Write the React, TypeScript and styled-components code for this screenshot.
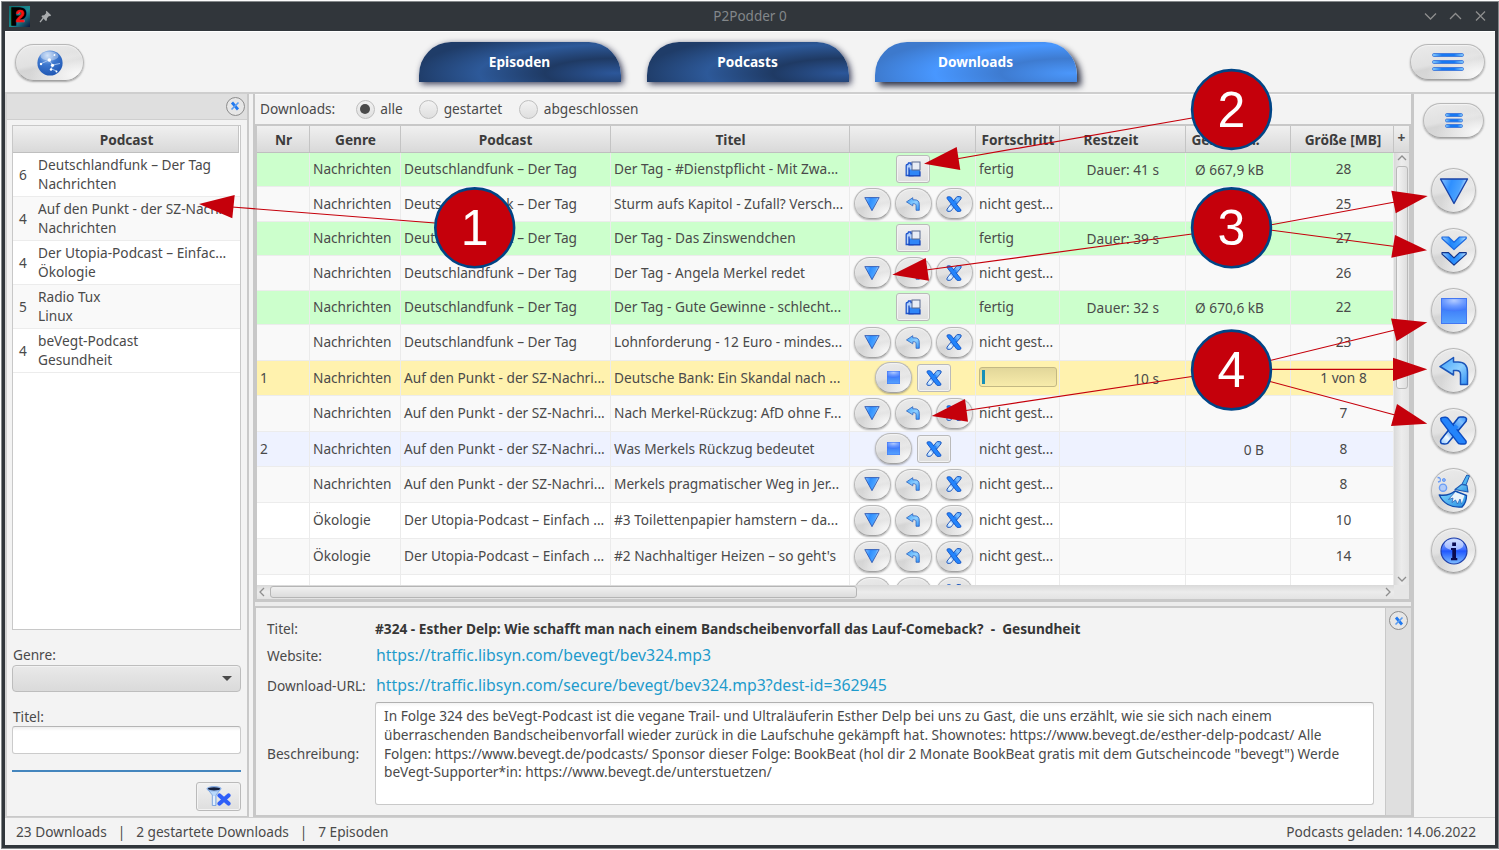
import React from "react";
import styled, { createGlobalStyle } from "styled-components";

const Global = createGlobalStyle`
  * { box-sizing: border-box; }
  body { margin: 0; background: #fdfdfd; overflow: hidden; }
  #root { font-family: "Noto Sans", sans-serif; font-size: 13.68px; color: #4a4a4a; line-height: 18px; white-space: nowrap; }
`;

const Window = styled.div`
  width: 1498px;
  height: 848px;
  margin: 1px 0 0 1px;
  border: 1px solid #85898b;
  background: #31363b;
  padding: 0 3px 3px;
  display: flex;
  flex-direction: column;
`;

const TitleBar = styled.header`
  height: 29px;
  display: grid;
  grid-template-columns: 200px 1fr 200px;
  align-items: center;
  color: #83878a;
  font-size: 13.5px;
`;
const TitleIcons = styled.div`
  display: flex;
  align-items: center;
  gap: 9px;
  padding-left: 4px;
`;
const TitleText = styled.div`
  text-align: center;
  line-height: 19px;
`;
const TitleControls = styled.div`
  display: flex;
  justify-content: flex-end;
  gap: 12px;
  padding: 0 8px 2px 0;
`;

const Toolbar = styled.div`
  height: 63px;
  background: #f3f3f3;
  border-top: 1px solid #fff;
  border-bottom: 2px solid #cecece;
  display: flex;
  justify-content: space-between;
  align-items: flex-start;
  padding: 12px 10px 0 10px;
`;
const Tabs = styled.nav`
  display: flex;
  gap: 26px;
  padding-left: 1px;
  margin-top: -2px;
`;
const Tab = styled.button<{ $active?: boolean }>`
  width: 202px;
  height: 40px;
  padding: 0 0 2px;
  border: 0;
  border-radius: 32px 32px 0 0 / 33px 33px 0 0;
  color: #fff;
  font: bold 13.66px "Noto Sans", sans-serif;
  background: ${(p) =>
    p.$active
      ? "radial-gradient(ellipse 200px 42px at 97% 78%, #4b97fb 0%, #3e7bd0 35%, #4897ff 68%, #3d79cc 100%)"
      : "radial-gradient(ellipse 200px 42px at 97% 78%, #2c579a 0%, #1f3a64 35%, #2d5999 68%, #1f3c68 100%)"};
  box-shadow: ${(p) =>
    p.$active ? "4px 4px 6px rgba(10,15,40,.85)" : "2px 2px 6px rgba(10,15,50,.8)"};
`;

const Glossy = styled.button<{ $w: number; $h: number }>`
  flex: none;
  width: ${(p) => p.$w}px;
  height: ${(p) => p.$h}px;
  padding: 0;
  display: flex;
  align-items: center;
  justify-content: center;
  border: 1.5px solid #b8b8b8;
  border-bottom-color: #a2a2a2;
  border-radius: ${(p) => p.$h / 2}px;
  background:
    radial-gradient(ellipse at 95% 85%, #fafafa 0%, rgba(245, 245, 245, 0) 55%),
    linear-gradient(168deg, #ebebeb 0%, #e1e1e1 48%, #d5d5d5 56%, #dcdcdc 100%);
  box-shadow: 0 1px 2px rgba(0, 0, 0, 0.32), inset 0 1px 1px #f4f4f4;
`;
const FlatButton = styled.button<{ $w: number; $h: number }>`
  flex: none;
  width: ${(p) => p.$w}px;
  height: ${(p) => p.$h}px;
  padding: 0;
  display: flex;
  align-items: center;
  justify-content: center;
  border: 1px solid #bababa;
  border-radius: 3px;
  background: linear-gradient(#f1f1f1, #dedede);
  box-shadow: inset 0 0 0 1px #f3f3f3;
`;
const CloseRound = styled.button`
  flex: none;
  width: 19px;
  height: 19px;
  padding: 0;
  display: flex;
  align-items: center;
  justify-content: center;
  border: 1.5px solid #8d8d8d;
  border-radius: 50%;
  background: #e6e6e6;
`;

const Main = styled.div`
  height: 724px;
  display: grid;
  grid-template-columns: 244px 4px 1161px 1fr;
  background: #f3f3f3;
`;

const Left = styled.aside`
  display: flex;
  flex-direction: column;
  background: #f3f3f3;
  border-right: 2px solid #c9c9c9;
  border-left: 2px solid #d2d2d2;
  border-bottom: 2px solid #c9c9c9;
`;
const LeftStrip = styled.div`
  height: 26px;
  background: #dfdfdf;
  border-bottom: 1px solid #cfcfcf;
  display: flex;
  justify-content: flex-end;
  align-items: center;
  padding: 0 2.5px 1px;
`;
const LeftBody = styled.div`
  flex: 1;
  display: flex;
  flex-direction: column;
  padding: 5px 6px 0 5px;
`;
const PodcastTable = styled.div`
  height: 505px;
  border: 1px solid #c8c8c8;
  background: #fff;
`;
const PodcastHead = styled.div`
  height: 27px;
  border-bottom: 1px solid #bfbfbf;
  border-right: 1px solid #c4c4c4;
  margin-right: 1px;
  background: linear-gradient(#f0f0f0, #d9d9d9);
  text-align: center;
  font-weight: bold;
  line-height: 27px;
  padding-left: 2px;
  color: #3c3c3c;
`;
const PodcastRow = styled.div<{ $alt: boolean }>`
  height: 44px;
  display: grid;
  grid-template-columns: 24px 1fr;
  align-items: center;
  padding-left: 1px;
  border-bottom: 1px solid #ececec;
  background: ${(p) => (p.$alt ? "#f9f9f9" : "#fff")};
`;
const Count = styled.span`
  padding-left: 5px;
`;
const TwoLines = styled.div`
  line-height: 19px;
  padding-bottom: 2px;
`;
const FieldLabel = styled.label<{ $top: number }>`
  height: 18px;
  padding-left: 1px;
  margin-top: ${(p) => p.$top}px;
`;
const Combo = styled.div`
  height: 27px;
  border: 1px solid #bdbdbd;
  border-radius: 4px;
  background: linear-gradient(#e9e9e9, #dadada);
  box-shadow: inset 0 1px 0 #f2f2f2;
  display: flex;
  align-items: center;
  justify-content: flex-end;
  padding-right: 8px;
  margin-top: 1px;
`;
const Input = styled.div`
  height: 28px;
  border: 1px solid #cbcbcb;
  border-top-color: #b5b5b5;
  border-radius: 3px;
  background: linear-gradient(#efefef, #fff 4px);
`;
const BlueLine = styled.div`
  height: 2px;
  margin-top: 16px;
  background: #4485bd;
`;
const ButtonEnd = styled.div`
  display: flex;
  justify-content: flex-end;
  margin-top: 10px;
`;

const Center = styled.main`
  background: #c8c8c8;
  display: flex;
  flex-direction: column;
`;
const FilterBar = styled.div`
  height: 30px;
  margin: 0 3px 0 2px;
  background: #f3f3f3;
  display: flex;
  align-items: center;
  padding: 0 0 1px 5px;
  border-top: 1px solid #fafafa;
`;
const Radio = styled.span<{ $gap: number }>`
  width: 19px;
  height: 19px;
  margin: 0 5.5px 0 ${(p) => p.$gap}px;
  border-radius: 50%;
  border: 1px solid #bfbfbf;
  background: linear-gradient(#f2f2f2, #dfdfdf);
  display: flex;
  align-items: center;
  justify-content: center;
`;
const Dot = styled.span`
  width: 10px;
  height: 10px;
  border-radius: 50%;
  background: #4a4a4a;
`;

const TableBox = styled.div`
  height: 473px;
  margin: 2px 5px 0 4px;
  background: #e6e6e6;
  display: grid;
  grid-template-columns: 1137px 15px;
  grid-template-rows: 27px 432px 14px;
`;
const columns = "53px 91px 210px 239px 126px 84px 126px 105px 103px";
const HeadRow = styled.div`
  display: grid;
  grid-template-columns: ${columns};
  background: linear-gradient(#f0f0f0, #d9d9d9);
  border-bottom: 1px solid #bfbfbf;
`;
const HeadCell = styled.div<{ $shift?: number }>`
  border-right: 1px solid #c4c4c4;
  text-align: center;
  font-weight: bold;
  line-height: 27px;
  color: #3c3c3c;
  text-indent: ${(p) => p.$shift ?? 1}px;
  overflow: hidden;
`;
const Rows = styled.div`
  overflow: hidden;
  background: #fff;
`;
const Row = styled.div<{ $h: number; $bg: string }>`
  height: ${(p) => p.$h}px;
  background: ${(p) => p.$bg};
  display: grid;
  grid-template-columns: ${columns};
  border-bottom: 1px solid #ececec;
`;
const Cell = styled.div<{ $align?: string; $padR?: number; $top?: number }>`
  display: flex;
  align-items: center;
  justify-content: ${(p) => p.$align ?? "flex-start"};
  gap: 4px;
  padding: ${(p) => p.$top ?? 0}px ${(p) => p.$padR ?? 0}px ${(p) => (p.$top ? 0 : 1)}px 3px;
  border-right: 1px solid #ebebeb;
  min-width: 0;
`;
const Actions = styled.div<{ $gap: number }>`
  display: flex;
  align-items: center;
  justify-content: center;
  gap: ${(p) => p.$gap}px;
  border-right: 1px solid #ebebeb;
  padding: 0 0 1px 1px;
`;
const Progress = styled.div`
  width: 78px;
  height: 20px;
  margin-top: -1px;
  border: 1px solid #c3b884;
  border-radius: 3px;
  background: linear-gradient(#e2d79a, #f7ebaa);
  padding: 2px;
`;
const ProgressFill = styled.div`
  width: 3px;
  height: 14px;
  background: #1690b8;
`;
const PlusCell = styled.div`
  background: linear-gradient(#f0f0f0, #d9d9d9);
  border-bottom: 1px solid #bfbfbf;
  font-weight: bold;
  text-align: center;
  line-height: 23px;
`;
const VScroll = styled.div`
  display: flex;
  flex-direction: column;
  align-items: center;
  background: linear-gradient(90deg, #d9d9d9, #ececec 50%, #e3e3e3);
  padding-top: 2px;
`;
const VThumb = styled.div`
  width: 12px;
  height: 223px;
  margin: 5px 0 187px;
  border: 1px solid #b9b9b9;
  border-radius: 3px;
  background: linear-gradient(90deg, #f4f4f4, #dedede);
`;
const HScroll = styled.div`
  display: flex;
  align-items: center;
  background: linear-gradient(#d9d9d9, #ececec 50%, #e3e3e3);
  padding: 0 2px 0 1px;
`;
const HThumb = styled.div`
  width: 587px;
  height: 12px;
  margin: 0 auto 0 5px;
  border: 1px solid #b5b5b5;
  border-radius: 3px;
  background: linear-gradient(#f0f0f0, #dcdcdc);
`;

const SplitH = styled.div`
  height: 4px;
  margin: 3px 3px 0 2px;
  background: #ececec;
`;
const Detail = styled.section`
  height: 207px;
  margin: 2px 3px 0 3px;
  display: grid;
  grid-template-columns: 1fr 26px;
  background: #f3f3f3;
`;
const DetailStrip = styled.div`
  background: #dfdfdf;
  border-left: 1px solid #c9c9c9;
  padding: 3px 0 0 3px;
`;
const DetailGrid = styled.div`
  display: grid;
  grid-template-columns: 108px 999px;
  grid-template-rows: 26px 27px 33px 103px;
  padding: 8px 0 0 11px;
  align-items: center;
`;
const TitleLine = styled.span`
  padding-bottom: 1px;
`;
const Strong = styled.strong`
  color: #363636;
  padding-bottom: 1px;
`;
const Link = styled.a`
  color: #1e9bcc;
  font-size: 15.8px;
  line-height: 19px;
  padding-left: 1px;
`;
const TextArea = styled.div`
  height: 103px;
  border: 1px solid #c9c9c9;
  border-top-color: #b0b0b0;
  border-radius: 3px;
  background: linear-gradient(#f3f3f3, #fff 4px);
  padding: 4px 0 0 8px;
  line-height: 18.75px;
`;

const Side = styled.aside`
  display: flex;
  flex-direction: column;
  align-items: center;
  padding: 9px 2px 0 0;
  gap: 15px;
`;
const SideGap = styled.div`
  height: 0;
`;

const Status = styled.footer`
  height: 27px;
  background: #f3f3f3;
  display: flex;
  justify-content: space-between;
  align-items: center;
  padding: 1px 19px 0 11px;
  box-shadow: 0 -1px 0 #d0d0d0;
`;
const Sep = styled.span`
  margin: 0 10.9px;
`;

const Overlay = styled.svg`
  position: absolute;
  left: 0;
  top: 0;
  pointer-events: none;
`;

const Defs = () => (
  <svg width="0" height="0" style={{ position: "absolute" }}>
    <defs>
      <linearGradient id="down" x1="0" y1="0" x2="1" y2="0.3">
        <stop offset="0" stopColor="#8ac4ff" />
        <stop offset=".4" stopColor="#2e8fff" />
        <stop offset=".75" stopColor="#4aa2ff" />
        <stop offset="1" stopColor="#e6f4ff" />
      </linearGradient>
      <linearGradient id="chev" x1="0" y1="0" x2="1" y2="0">
        <stop offset="0" stopColor="#9fd0ff" />
        <stop offset=".35" stopColor="#1f85fa" />
        <stop offset=".7" stopColor="#3b9bff" />
        <stop offset="1" stopColor="#bfe4ff" />
      </linearGradient>
      <radialGradient id="sq" cx=".5" cy=".2" r=".8">
        <stop offset="0" stopColor="#b3cbff" />
        <stop offset=".5" stopColor="#6d9bff" />
        <stop offset="1" stopColor="#3f78fa" />
      </radialGradient>
      <linearGradient id="sqLow" x1="0" y1="0" x2="0" y2="1">
        <stop offset="0" stopColor="#2b62f4" />
        <stop offset="1" stopColor="#58a4ff" />
      </linearGradient>
      <linearGradient id="undo" x1="0" y1="0" x2="1" y2="1">
        <stop offset="0" stopColor="#3b9ffa" />
        <stop offset=".55" stopColor="#8fd0ff" />
        <stop offset="1" stopColor="#2f90f4" />
      </linearGradient>
      <linearGradient id="slash" x1="0" y1="1" x2="1" y2="0">
        <stop offset="0" stopColor="#8fc6ff" />
        <stop offset=".25" stopColor="#f0faff" />
        <stop offset=".5" stopColor="#2a83f0" />
        <stop offset=".8" stopColor="#7fc0ff" />
        <stop offset="1" stopColor="#2f8ffb" />
      </linearGradient>
      <linearGradient id="bar" x1="0" y1="0" x2="1" y2="0">
        <stop offset="0" stopColor="#8fd6ff" />
        <stop offset=".3" stopColor="#1379f4" />
        <stop offset=".7" stopColor="#1379f4" />
        <stop offset="1" stopColor="#8fd6ff" />
      </linearGradient>
      <radialGradient id="globe" cx=".4" cy=".2" r=".8">
        <stop offset="0" stopColor="#b9d3f5" />
        <stop offset=".45" stopColor="#3f79cf" />
        <stop offset="1" stopColor="#1f57b4" />
      </radialGradient>
      <linearGradient id="info" x1="0" y1="0" x2="0" y2="1">
        <stop offset="0" stopColor="#a9c4ff" />
        <stop offset=".45" stopColor="#3c6cff" />
        <stop offset=".5" stopColor="#1f56ff" />
        <stop offset="1" stopColor="#7fc0ff" />
      </linearGradient>
      <linearGradient id="broom" x1="0" y1="0" x2="1" y2="1">
        <stop offset="0" stopColor="#7fd8ff" />
        <stop offset="1" stopColor="#2a8fe0" />
      </linearGradient>
      <linearGradient id="app" x1="0" y1="0" x2="1" y2="1">
        <stop offset="0" stopColor="#0d6a6e" />
        <stop offset=".55" stopColor="#1b8c92" />
        <stop offset="1" stopColor="#10143c" />
      </linearGradient>
    </defs>
  </svg>
);

type IconProps = { size: number };

const DownIcon = ({ size }: IconProps) => (
  <svg width={size} height={size} viewBox="0 0 30 30">
    <path d="M1.500 3H28.500L15 27.500Z" fill="url(#down)" stroke="#1a43a6" strokeWidth="1.400" strokeLinejoin="round" />
  </svg>
);
const DoubleDownIcon = ({ size }: IconProps) => (
  <svg width={size} height={size} viewBox="0 0 30 30">
    {[0, 15.6].map((y) => (
      <path
        key={y}
        transform={`translate(0 ${y})`}
        d="M3 1H9.500L15 6.300L20.500 1H27.200V2.500L15 13.500L3 2.500Z"
        fill="url(#chev)"
        stroke={y ? "#10348c" : "#1c6ae0"}
        strokeWidth="1.200"
        strokeLinejoin="round"
      />
    ))}
  </svg>
);
const StopIcon = ({ size }: IconProps) => (
  <svg width={size} height={size} viewBox="0 0 26 26">
    <rect width="26" height="26" fill="url(#sqLow)" />
    <path d="M0 0H26V11Q13 15.500 0 11Z" fill="url(#sq)" />
    <rect x=".5" y=".5" width="25" height="25" fill="none" stroke="#4377f2" />
  </svg>
);
const UndoIcon = ({ size }: IconProps) => (
  <svg width={size} height={size} viewBox="0 0 30 30">
    <path
      d="M1 10.500L14.500 1.500V6H19C25.500 6 28.500 10 28.500 16V28.500H21.500V18.500C21.500 15.500 20 14.500 17.500 14.500H14.500V19Z"
      fill="url(#undo)"
      stroke="#1c55b8"
      strokeWidth="1.500"
      strokeLinejoin="round"
    />
  </svg>
);
const XIcon = ({ size }: IconProps) => (
  <svg width={size} height={size} viewBox="0 0 30 30">
    <path
      d="M28.500 3Q28 1 25.500 1H22Q20 1 19 3L2 24.500Q1 27 2.500 28.500Q6 29.500 9 28.300L28 5.500Z"
      fill="url(#slash)"
      stroke="#0d46b4"
      strokeWidth="1.600"
      strokeLinejoin="round"
    />
    <path
      d="M1.800 2.500Q2.500 1 7 1.300Q9 1.500 10.200 3.500L28 26Q28.500 29 26 29H22.500Q20 29 19 27L2.200 5Z"
      fill="#2484fb"
      stroke="#0d4cc0"
      strokeWidth="1.500"
      strokeLinejoin="round"
    />
    <path d="M12.200 17.500L18.500 10" stroke="#2484fb" strokeWidth="4.500" />
  </svg>
);
const SmallX = () => (
  <svg width="10" height="10" viewBox="0 0 10 10">
    <path d="M2 1.500L8 8.500" stroke="#2079f0" strokeWidth="2.800" />
    <path d="M8.500 1.500L1.500 8.500" stroke="#5b9cf0" strokeWidth="1.600" />
  </svg>
);
const BarsIcon = ({ w, h }: { w: number; h: number }) => (
  <svg width={w} height={h} viewBox={`0 0 ${w} ${h}`}>
    {[0, 1, 2].map((i) => (
      <rect
        key={i}
        x=".6"
        y={i * ((h - 4) / 2) + 0.6}
        width={w - 1.2}
        height="2.800"
        rx="1"
        fill="url(#bar)"
        stroke="#3f78dc"
        strokeWidth="1"
      />
    ))}
  </svg>
);
const FolderIcon = () => (
  <svg width="16" height="16" viewBox="0 0 16 16">
    <path d="M1.200 14.500V4.500Q1.200 3.500 2.200 3.500H2.800L3.500 2H6V3.500H8V14.500Z" fill="#b5d2fb" stroke="#1f55cc" strokeWidth="1.300" />
    <path d="M4 15V8.500H15V15Z" fill="#2f86f8" />
    <rect x="7" y="1" width="8" height="8" fill="#e9edf6" stroke="#5b6a90" strokeWidth="1" />
    <path d="M4 6.500V14.800H15V10.200" fill="none" stroke="#123fb4" strokeWidth="1.200" />
  </svg>
);
const GlobeIcon = () => (
  <svg width="26" height="26" viewBox="0 0 26 26">
    <circle cx="13" cy="13" r="12.600" fill="url(#globe)" />
    <ellipse cx="12.500" cy="6" rx="9" ry="4.500" fill="#fff" opacity=".35" />
    <path d="M3.500 14L12 10L15.500 15L23 13.500M15.500 15L14.500 19L19.500 21M17 5L12 10" stroke="#a9c8f2" strokeWidth=".9" fill="none" />
    <g fill="#fff">
      <circle cx="4" cy="14" r="1.200" />
      <circle cx="12.300" cy="10" r="1.800" />
      <circle cx="15.500" cy="15.300" r="1.600" />
      <circle cx="14" cy="19.500" r="1.200" />
      <circle cx="19.500" cy="21.500" r="1" />
      <circle cx="17.500" cy="5" r=".9" />
    </g>
  </svg>
);
const FilterIcon = () => (
  <svg width="25" height="21" viewBox="0 0 25 21">
    <path d="M1 2.500L6.300 9V19.500H10V9L15 2.500Z" fill="#b8d8fb" stroke="#7ba4dc" strokeWidth=".9" />
    <ellipse cx="8" cy="2.800" rx="6.800" ry="2.200" fill="#16203c" stroke="#8eb4ea" strokeWidth="1.200" />
    <path d="M8 10V19" stroke="#fff" strokeWidth="1.200" />
    <path d="M13.500 9.500L22.500 17.500M22.500 9.500L13.500 17.500" stroke="#2f5ff8" strokeWidth="4.200" strokeLinecap="round" />
  </svg>
);
const BroomIcon = () => (
  <svg width="34" height="34" viewBox="0 0 34 34">
    <g fill="none" stroke="#6a9cf4">
      <circle cx="6" cy="13.700" r="3.600" fill="#b3ccf8" strokeWidth="1.400" />
      <circle cx="6.900" cy="6" r="1.500" fill="#86b0f8" />
      <path d="M.5 3.500Q4.500 3.500 3 7.500L1 8" strokeWidth="1.300" />
    </g>
    <path
      d="M2.300 21C9 22 14.500 20 18 17L29.500 21.500C29.500 26 28 30 25 33C14 34 6 29 2.300 21Z"
      fill="url(#broom)"
      stroke="#0f4cae"
      strokeWidth="1.400"
      strokeLinejoin="round"
    />
    <path d="M18 18L27.500 21.500L24.500 30L23 25L20.500 30L18.500 26L15 28.500L16 24L11.500 25.500Z" fill="#e8f3fb" />
    <path d="M18 18L11.500 25.500L16 24L15 28.500L18.500 26L20.500 30L23 25L24.500 30" fill="none" stroke="#2a63b8" strokeWidth=".8" />
    <path d="M29.800 1L32.500 1.800L29 11L25 10Z" fill="#4fb4f0" stroke="#1d5ab4" strokeWidth="1" />
    <path d="M18 15.500L24.500 10.500L30 11.500L31 18Z" fill="url(#broom)" stroke="#1d5ab4" strokeWidth="1.100" strokeLinejoin="round" />
  </svg>
);
const InfoIcon = () => (
  <svg width="28" height="28" viewBox="0 0 28 28">
    <circle cx="14" cy="14" r="13" fill="url(#info)" stroke="#1f3faa" strokeWidth="1.200" />
    <ellipse cx="14" cy="7.500" rx="9.500" ry="5.500" fill="#fff" opacity=".5" />
    <path d="M12.200 5.500H16V9H12.200ZM11 11H16V21H17.300V23.300H11V21H12.300V13H11Z" fill="#0a0a50" />
  </svg>
);
const AppIcon = () => (
  <svg width="21" height="21" viewBox="0 0 21 21" overflow="visible">
    <rect width="21" height="21" fill="url(#app)" />
    <text x="1.500" y="19.300" fontFamily="Liberation Sans, sans-serif" fontWeight="bold" fontSize="24" stroke="#000" strokeWidth="1.500" fill="#000">P</text>
    <text x="6.500" y="15.500" fontFamily="Liberation Sans, sans-serif" fontWeight="bold" fontSize="16" stroke="#f41414" strokeWidth=".6" fill="#f41414">2</text>
  </svg>
);
const PinIcon = () => (
  <svg width="13" height="13" viewBox="0 0 13 13" fill="#a9acae">
    <path d="M7.500 .8L12.200 5.300L11 6.200L10 6L8 8.200L7.800 10.500L6.800 11L2.500 6.500L3 5.500L5.200 5.200L7.300 3L6.800 2Z" />
    <path d="M4.300 8L1 12.200" stroke="#a9acae" strokeWidth="1.300" />
  </svg>
);
const Chevron = ({ d, w = 10, h = 6 }: { d: string; w?: number; h?: number }) => (
  <svg width={w} height={h} viewBox={`0 0 ${w} ${h}`} fill="none" stroke="#8e8e8e" strokeWidth="1.300">
    <path d={d} />
  </svg>
);

type Kind = "folder" | "wait" | "run";
type Item = {
  h: number; bg: string; nr?: string; genre: string; podcast: string; title: string;
  kind: Kind; state?: string; rest?: string; speed?: string; size: string;
};
const GREEN = "#ccffcc";
const GREY = "#f9f9f9";
const DF = "Deutschlandfunk – Der Tag";
const SZ = "Auf den Punkt - der SZ-Nachri...";
const UT = "Der Utopia-Podcast – Einfach ...";
const NG = "nicht gest...";
const items: Item[] = [
  { h: 34, bg: GREEN, genre: "Nachrichten", podcast: DF, title: "Der Tag - #Dienstpflicht - Mit Zwa...", kind: "folder", state: "fertig", rest: "Dauer: 41 s", speed: "Ø 667,9 kB", size: "28" },
  { h: 35, bg: GREY, genre: "Nachrichten", podcast: DF, title: "Sturm aufs Kapitol - Zufall? Versch...", kind: "wait", state: NG, size: "25" },
  { h: 34, bg: GREEN, genre: "Nachrichten", podcast: DF, title: "Der Tag - Das Zinswendchen", kind: "folder", state: "fertig", rest: "Dauer: 39 s", size: "27" },
  { h: 35, bg: GREY, genre: "Nachrichten", podcast: DF, title: "Der Tag - Angela Merkel redet", kind: "wait", state: NG, size: "26" },
  { h: 34, bg: GREEN, genre: "Nachrichten", podcast: DF, title: "Der Tag - Gute Gewinne - schlecht...", kind: "folder", state: "fertig", rest: "Dauer: 32 s", speed: "Ø 670,6 kB", size: "22" },
  { h: 36, bg: GREY, genre: "Nachrichten", podcast: DF, title: "Lohnforderung - 12 Euro - mindes...", kind: "wait", state: NG, size: "23" },
  { h: 35, bg: "#fff2ae", nr: "1", genre: "Nachrichten", podcast: SZ, title: "Deutsche Bank: Ein Skandal nach ...", kind: "run", rest: "10 s", size: "1 von 8" },
  { h: 36, bg: GREY, genre: "Nachrichten", podcast: SZ, title: "Nach Merkel-Rückzug: AfD ohne F...", kind: "wait", state: NG, size: "7" },
  { h: 35, bg: "#eef2ff", nr: "2", genre: "Nachrichten", podcast: SZ, title: "Was Merkels Rückzug bedeutet", kind: "run", state: NG, speed: "0 B", size: "8" },
  { h: 36, bg: GREY, genre: "Nachrichten", podcast: SZ, title: "Merkels pragmatischer Weg in Jer...", kind: "wait", state: NG, size: "8" },
  { h: 36, bg: "#fff", genre: "Ökologie", podcast: UT, title: "#3 Toilettenpapier hamstern – da...", kind: "wait", state: NG, size: "10" },
  { h: 36, bg: GREY, genre: "Ökologie", podcast: UT, title: "#2 Nachhaltiger Heizen – so geht's", kind: "wait", state: NG, size: "14" },
  { h: 36, bg: "#fff", genre: "", podcast: "", title: "", kind: "wait", size: "" },
];

const RowActions = ({ kind }: { kind: Kind }) => {
  if (kind === "folder")
    return (
      <Actions $gap={0}>
        <FlatButton $w={34} $h={28}><FolderIcon /></FlatButton>
      </Actions>
    );
  if (kind === "run")
    return (
      <Actions $gap={5}>
        <Glossy $w={37} $h={31}><StopIcon size={13} /></Glossy>
        <FlatButton $w={34} $h={28}><XIcon size={16} /></FlatButton>
      </Actions>
    );
  return (
    <Actions $gap={4}>
      <Glossy $w={37} $h={31}><DownIcon size={16} /></Glossy>
      <Glossy $w={37} $h={31}><UndoIcon size={14} /></Glossy>
      <Glossy $w={37} $h={31}><XIcon size={16} /></Glossy>
    </Actions>
  );
};

const podcasts = [
  ["6", "Deutschlandfunk – Der Tag", "Nachrichten"],
  ["4", "Auf den Punkt - der SZ-Nach...", "Nachrichten"],
  ["4", "Der Utopia-Podcast – Einfac...", "Ökologie"],
  ["5", "Radio Tux", "Linux"],
  ["4", "beVegt-Podcast", "Gesundheit"],
];

const arrows = [
  { line: [435, 223, 232, 207], tip: "199,204 234.700,195 232.300,218.300" },
  { line: [1192, 118, 956, 159], tip: "924,163.700 956.700,147 960.300,170" },
  { line: [1192, 234, 926, 270], tip: "892.300,274.700 925.700,258 929,280.700" },
  { line: [1270, 225, 1395, 202], tip: "1427.700,196 1391.300,190.700 1395.700,213.300" },
  { line: [1270, 230, 1395, 246.5], tip: "1427,250.300 1395,235 1391.300,257.700" },
  { line: [1270, 360.5, 1395, 330], tip: "1427.300,322.300 1391,318.500 1396.500,341.300" },
  { line: [1270, 369.3, 1395, 369.3], tip: "1427.300,369.300 1393,357.700 1393,381" },
  { line: [1270, 381.5, 1395, 415], tip: "1427.300,423.700 1397,404 1391,426" },
  { line: [1192, 376.5, 966, 410.5], tip: "931.700,416 965,399 968,421.700" },
];
const badges = [
  { n: "1", x: 474.7, y: 227.8 },
  { n: "2", x: 1231.5, y: 109.5 },
  { n: "3", x: 1231.5, y: 227.8 },
  { n: "4", x: 1231.5, y: 370 },
];

export default function App() {
  return (
    <>
      <Global />
      <Defs />
      <Window>
        <TitleBar>
          <TitleIcons><AppIcon /><PinIcon /></TitleIcons>
          <TitleText>P2Podder 0</TitleText>
          <TitleControls>
            <Chevron w={13} h={12} d="M1 3.500L6.500 9L12 3.500" />
            <Chevron w={13} h={12} d="M1 9L6.500 3.500L12 9" />
            <Chevron w={13} h={12} d="M2 1.500L11 10.500M11 1.500L2 10.500" />
          </TitleControls>
        </TitleBar>

        <Toolbar>
          <Glossy $w={69} $h={37}><GlobeIcon /></Glossy>
          <Tabs>
            <Tab>Episoden</Tab>
            <Tab>Podcasts</Tab>
            <Tab $active>Downloads</Tab>
          </Tabs>
          <Glossy $w={75} $h={36}><BarsIcon w={32} h={18} /></Glossy>
        </Toolbar>

        <Main>
          <Left>
            <LeftStrip><CloseRound><SmallX /></CloseRound></LeftStrip>
            <LeftBody>
              <PodcastTable>
                <PodcastHead>Podcast</PodcastHead>
                {podcasts.map(([n, name, genre], i) => (
                  <PodcastRow key={i} $alt={i % 2 === 1}>
                    <Count>{n}</Count>
                    <TwoLines><div>{name}</div><div>{genre}</div></TwoLines>
                  </PodcastRow>
                ))}
              </PodcastTable>
              <FieldLabel $top={16}>Genre:</FieldLabel>
              <Combo>
                <svg width="10" height="5" viewBox="0 0 10 5"><path d="M0 0H10L5 5Z" fill="#4a4a4a" /></svg>
              </Combo>
              <FieldLabel $top={16}>Titel:</FieldLabel>
              <Input />
              <BlueLine />
              <ButtonEnd><FlatButton $w={45} $h={29}><FilterIcon /></FlatButton></ButtonEnd>
            </LeftBody>
          </Left>
          <div />
          <Center>
            <FilterBar>
              Downloads:
              <Radio $gap={20.5}><Dot /></Radio>alle
              <Radio $gap={16.5} />gestartet
              <Radio $gap={17} />abgeschlossen
            </FilterBar>
            <TableBox>
              <HeadRow>
                <HeadCell>Nr</HeadCell>
                <HeadCell>Genre</HeadCell>
                <HeadCell $shift={0}>Podcast</HeadCell>
                <HeadCell>Titel</HeadCell>
                <HeadCell />
                <HeadCell>Fortschritt</HeadCell>
                <HeadCell $shift={-23}>Restzeit</HeadCell>
                <HeadCell $shift={-25}>Geschwi...</HeadCell>
                <HeadCell $shift={2}>Größe [MB]</HeadCell>
              </HeadRow>
              <PlusCell>+</PlusCell>
              <Rows>
                {items.map((r, i) => (
                  <Row key={i} $h={r.h} $bg={r.bg}>
                    <Cell>{r.nr}</Cell>
                    <Cell>{r.genre}</Cell>
                    <Cell>{r.podcast}</Cell>
                    <Cell>{r.title}</Cell>
                    <RowActions kind={r.kind} />
                    <Cell>{r.kind === "run" && !r.state ? <Progress><ProgressFill /></Progress> : r.state}</Cell>
                    <Cell $align="flex-end" $padR={26} $top={1}>{r.rest}</Cell>
                    <Cell $align="flex-end" $padR={26} $top={1}>{r.speed}</Cell>
                    <Cell $align="center">{r.size}</Cell>
                  </Row>
                ))}
              </Rows>
              <VScroll>
                <Chevron d="M1 5L5 1L9 5" />
                <VThumb />
                <Chevron d="M1 1L5 5L9 1" />
              </VScroll>
              <HScroll>
                <Chevron w={7} h={10} d="M6 1L2 5L6 9" />
                <HThumb />
                <Chevron w={7} h={10} d="M1 1L5 5L1 9" />
              </HScroll>
              <div />
            </TableBox>
            <SplitH />
            <Detail>
              <DetailGrid>
                <TitleLine>Titel:</TitleLine>
                <Strong>#324 - Esther Delp: Wie schafft man nach einem Bandscheibenvorfall das Lauf-Comeback?&nbsp; -&nbsp; Gesundheit</Strong>
                <span>Website:</span>
                <Link>https://traffic.libsyn.com/bevegt/bev324.mp3</Link>
                <span>Download-URL:</span>
                <Link>https://traffic.libsyn.com/secure/bevegt/bev324.mp3?dest-id=362945</Link>
                <span>Beschreibung:</span>
                <TextArea>
                  In Folge 324 des beVegt-Podcast ist die vegane Trail- und Ultraläuferin Esther Delp bei uns zu Gast, die uns erzählt, wie sie sich nach einem<br />
                  überraschenden Bandscheibenvorfall wieder zurück in die Laufschuhe gekämpft hat. Shownotes: https://www.bevegt.de/esther-delp-podcast/ Alle<br />
                  Folgen: https://www.bevegt.de/podcasts/ Sponsor dieser Folge: BookBeat (hol dir 2 Monate BookBeat gratis mit dem Gutscheincode "bevegt") Werde<br />
                  beVegt-Supporter*in: https://www.bevegt.de/unterstuetzen/
                </TextArea>
              </DetailGrid>
              <DetailStrip><CloseRound><SmallX /></CloseRound></DetailStrip>
            </Detail>
          </Center>
          <Side>
            <Glossy $w={61} $h={35}><BarsIcon w={18} h={15} /></Glossy>
            <SideGap />
            <Glossy $w={45} $h={45}><DownIcon size={30} /></Glossy>
            <Glossy $w={45} $h={45}><DoubleDownIcon size={30} /></Glossy>
            <Glossy $w={45} $h={45}><StopIcon size={26} /></Glossy>
            <Glossy $w={45} $h={45}><UndoIcon size={30} /></Glossy>
            <Glossy $w={45} $h={45}><XIcon size={29} /></Glossy>
            <Glossy $w={45} $h={45}><BroomIcon /></Glossy>
            <Glossy $w={45} $h={45}><InfoIcon /></Glossy>
          </Side>
        </Main>
        <Status>
          <span>23 Downloads<Sep>|</Sep>2 gestartete Downloads<Sep>|</Sep>7 Episoden</span>
          <span>Podcasts geladen: 14.06.2022</span>
        </Status>
      </Window>

      <Overlay width="1499" height="850" viewBox="0 0 1499 850">
        {arrows.map((a, i) => (
          <g key={i}>
            <line x1={a.line[0]} y1={a.line[1]} x2={a.line[2]} y2={a.line[3]} stroke="#c5000b" strokeWidth="1.200" />
            <polygon points={a.tip} fill="#c5000b" />
          </g>
        ))}
        {badges.map((b) => (
          <g key={b.n}>
            <circle cx={b.x} cy={b.y} r="39.400" fill="#c5000b" stroke="#004586" strokeWidth="2.600" />
            <text x={b.x} y={b.y + 17} textAnchor="middle" fontFamily="Liberation Sans, sans-serif" fontSize="50" fill="#fff">{b.n}</text>
          </g>
        ))}
      </Overlay>
    </>
  );
}
